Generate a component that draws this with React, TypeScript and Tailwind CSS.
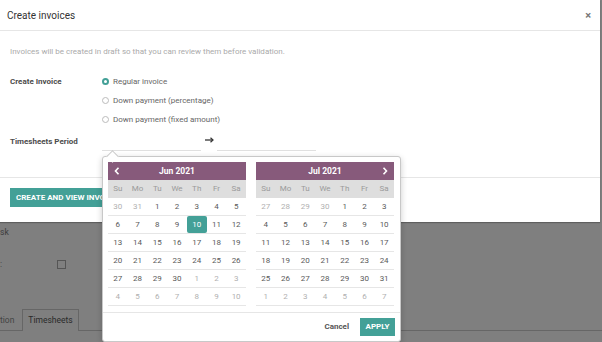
import React from "react";

type Cell = { d: number; o: boolean; sel?: boolean };

function buildJun(): Cell[][] {
  const rows: Cell[][] = [];
  rows.push([{ d: 30, o: true }, { d: 31, o: true }, ...[1, 2, 3, 4, 5].map((d) => ({ d, o: false }))]);
  for (let s = 6; s <= 20; s += 7) rows.push([0, 1, 2, 3, 4, 5, 6].map((i) => ({ d: s + i, o: false, sel: s + i === 10 })));
  rows.push([...[27, 28, 29, 30].map((d) => ({ d, o: false })), ...[1, 2, 3].map((d) => ({ d, o: true }))]);
  rows.push([4, 5, 6, 7, 8, 9, 10].map((d) => ({ d, o: true })));
  return rows;
}

function buildJul(): Cell[][] {
  const rows: Cell[][] = [];
  rows.push([...[27, 28, 29, 30].map((d) => ({ d, o: true })), ...[1, 2, 3].map((d) => ({ d, o: false }))]);
  for (let s = 4; s <= 25; s += 7) rows.push([0, 1, 2, 3, 4, 5, 6].map((i) => ({ d: s + i, o: false })));
  rows.push([1, 2, 3, 4, 5, 6, 7].map((d) => ({ d, o: true })));
  return rows;
}

const days = ["Su", "Mo", "Tu", "We", "Th", "Fr", "Sa"];

function Calendar({ title, rows, left, right }: { title: string; rows: Cell[][]; left?: boolean; right?: boolean }) {
  return (
    <div className="w-[138px] flex flex-col">
      <div className="h-[18px] bg-[#875a7b] flex items-center justify-between px-[6px] text-white">
        <span className="w-[8px] flex items-center">
          {left && (
            <svg width="6" height="8" viewBox="0 0 6 8">
              <path d="M4.5 0.8 L1.5 4 L4.5 7.2" stroke="white" strokeWidth="1.6" fill="none" />
            </svg>
          )}
        </span>
        <span className="text-[8.5px] font-bold">{title}</span>
        <span className="w-[8px] flex items-center justify-end">
          {right && (
            <svg width="6" height="8" viewBox="0 0 6 8">
              <path d="M1.5 0.8 L4.5 4 L1.5 7.2" stroke="white" strokeWidth="1.6" fill="none" />
            </svg>
          )}
        </span>
      </div>
      <div className="h-[18px] bg-[#dedede] grid grid-cols-7 items-center text-[8px] text-[#9a9a9a] text-center">
        {days.map((d) => (
          <span key={d}>{d}</span>
        ))}
      </div>
      {rows.map((r, i) => (
        <div key={i} className="h-[18px] grid grid-cols-7 border-b border-[#e6e6e6] text-[8px] text-center">
          {r.map((c, j) => (
            <span
              key={j}
              className={
                c.sel
                  ? "flex items-center justify-center bg-[#43a097] text-white rounded-[2px]"
                  : c.o
                  ? "flex items-center justify-center text-[#b0b0b0]"
                  : "flex items-center justify-center text-[#5a5a5a]"
              }
            >
              {c.d}
            </span>
          ))}
        </div>
      ))}
    </div>
  );
}

function Radio({ checked, label }: { checked?: boolean; label: string }) {
  return (
    <div className="h-[19px] flex items-center">
      <span
        className={
          checked
            ? "w-[7px] h-[7px] rounded-full border-[2px] border-[#43a097] bg-white"
            : "w-[7px] h-[7px] rounded-full border border-[#bbb] bg-white"
        }
      />
      <span className="ml-[4px] text-[8px] text-[#666]">{label}</span>
    </div>
  );
}

export default function App() {
  return (
    <div className="relative w-[602px] h-[342px] bg-[#7f7f7f] overflow-hidden font-['Roboto',sans-serif]">
      {/* modal */}
      <div className="w-[600px] h-[222px] bg-white flex flex-col shadow-[0_1px_1px_rgba(0,0,0,0.25)]">
        <div className="h-[31px] border-b border-[#e6e6e6] flex items-center justify-between pl-[7px] pr-[9px]">
          <span className="text-[10px] text-[#333]">Create invoices</span>
          <span className="text-[11px] font-bold text-[#777] leading-none">×</span>
        </div>
        <div className="h-[146px] px-[10px] pt-[15px]">
          <p className="text-[8px] leading-[12px] text-[#aaa]">
            Invoices will be created in draft so that you can review them before validation.
          </p>
          <div className="mt-[14px] flex">
            <div className="w-[92px] h-[19px] flex items-center text-[8px] font-bold text-[#4c4c4c]">Create Invoice</div>
            <div className="flex flex-col">
              <Radio checked label="Regular invoice" />
              <Radio label="Down payment (percentage)" />
              <Radio label="Down payment (fixed amount)" />
            </div>
          </div>
          <div className="mt-[4px] flex h-[18px]">
            <div className="w-[92px] flex items-center text-[8px] font-bold text-[#4c4c4c]">Timesheets Period</div>
            <div className="flex items-stretch">
              <div className="w-[99px] border-b border-[#e0e0e0]" />
              <div className="w-[16px] flex items-center justify-center pb-[4px]">
                <svg width="9" height="6" viewBox="0 0 9 6">
                  <path d="M0 3 H7.5" stroke="#333" strokeWidth="1.3" />
                  <path d="M5.5 0.8 L8 3 L5.5 5.2" stroke="#333" strokeWidth="1.2" fill="none" />
                </svg>
              </div>
              <div className="w-[99px] border-b border-[#e0e0e0]" />
            </div>
          </div>
        </div>
        <div className="h-[45px] border-t border-[#e6e6e6] pt-[10px] pl-[10px]">
          <div className="h-[19px] w-[120px] bg-[#43a097] flex items-center pl-[6px] text-white text-[8px] font-bold whitespace-nowrap overflow-hidden">
            CREATE AND VIEW INVOICES
          </div>
        </div>
      </div>

      {/* dimmed page */}
      <div className="flex flex-col text-[8.5px] text-[#3c3c3c]">
        <div className="h-[20px] flex items-center">sk</div>
        <div className="mt-[13px] h-[18px] flex items-center">
          <span className="w-[57px]">:</span>
          <span className="w-[9px] h-[9px] border border-[#555]" />
        </div>
        <div className="mt-[36px] h-[22px] flex items-end">
          <div className="w-[22px] h-[21px] flex items-center text-[#444] border-b border-[#666]">tion</div>
          <div className="w-[57px] h-[22px] border border-b-0 border-[#666] flex items-center justify-center text-[#2a2a2a]">
            Timesheets
          </div>
          <div className="flex-1 border-b border-[#666]" />
        </div>
      </div>

      {/* date picker */}
      <div className="absolute left-[102px] top-[156px] w-[299px] h-[186px] bg-white border border-[#c8c8c8] rounded-[3px] shadow-[0_2px_6px_rgba(0,0,0,0.2)] flex flex-col">
        <div className="absolute left-[5px] top-[-5px] w-[9px] h-[9px] bg-white border-l border-t border-[#c8c8c8] rotate-45" />
        <div className="flex gap-[10px] pl-[5px] pt-[5px]">
          <Calendar title="Jun 2021" rows={buildJun()} left />
          <Calendar title="Jul 2021" rows={buildJul()} right />
        </div>
        <div className="mt-[6px] border-t border-[#e6e6e6] h-[29px] flex items-center justify-end pr-[5px]">
          <span className="text-[8px] font-bold text-[#555] mr-[11px]">Cancel</span>
          <span className="h-[18px] w-[35px] bg-[#43a097] text-white text-[8px] font-bold flex items-center justify-center">APPLY</span>
        </div>
      </div>
    </div>
  );
}
